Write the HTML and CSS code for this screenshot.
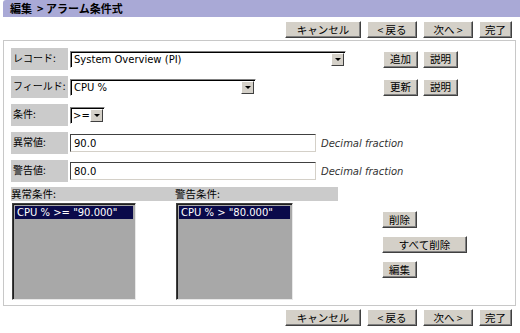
FILE: index.html
```html
<!DOCTYPE html>
<html lang="ja">
<head>
<meta charset="UTF-8" />
<title>アラーム条件式</title>
<link rel="stylesheet" href="styles.css">
</head>
<body>
<div class="titlebar">編集 &nbsp;&gt; アラーム条件式</div>

<div class="toolbar">
    <button class="btn w-cancel">キャンセル</button>
    <button class="btn w-back">&lt; 戻る</button>
    <button class="btn w-next">次へ &gt;</button>
    <button class="btn w-done">完了</button>
</div>

<div class="panel">
    <div class="row">
        <div class="label">レコード:</div>
        <div class="select sel-record">
            <span class="sel-text">System Overview (PI)</span>
            <span class="arrow"></span>
        </div>
        <div class="side-btns">
            <button class="btn w-small">追加</button>
            <button class="btn w-small">説明</button>
        </div>
    </div>
    <div class="row">
        <div class="label">フィールド:</div>
        <div class="select sel-field">
            <span class="sel-text">CPU %</span>
            <span class="arrow"></span>
        </div>
        <div class="side-btns">
            <button class="btn w-small">更新</button>
            <button class="btn w-small">説明</button>
        </div>
    </div>
    <div class="row">
        <div class="label">条件:</div>
        <div class="select sel-op">
            <span class="sel-text">&gt;=</span>
            <span class="arrow"></span>
        </div>
    </div>
    <div class="row">
        <div class="label">異常値:</div>
        <input type="text" class="field" value="90.0">
        <span class="hint">Decimal fraction</span>
    </div>
    <div class="row">
        <div class="label">警告値:</div>
        <input type="text" class="field" value="80.0">
        <span class="hint">Decimal fraction</span>
    </div>

    <div class="list-head">
        <span class="head-alarm">異常条件:</span>
        <span>警告条件:</span>
    </div>
    <div class="lists">
        <div class="listbox list-alarm">
            <div class="item">CPU % &gt;= "90.000"</div>
        </div>
        <div class="listbox list-warn">
            <div class="item">CPU % &gt; "80.000"</div>
        </div>
        <div class="list-btns">
            <button class="btn w-small">削除</button>
            <button class="btn w-all">すべて削除</button>
            <button class="btn w-small">編集</button>
        </div>
    </div>
</div>

<div class="toolbar bottom">
    <button class="btn w-cancel">キャンセル</button>
    <button class="btn w-back">&lt; 戻る</button>
    <button class="btn w-next">次へ &gt;</button>
    <button class="btn w-done">完了</button>
</div>
</body>
</html>
```

FILE: styles.css
```css
body {
    margin: 0;
    background: #fff;
    font-family: "DejaVu Sans", "Noto Sans CJK JP", sans-serif;
    font-size: 11px;
    color: #000;
    width: 520px;
}
.titlebar {
    margin-left: 3px;
    height: 17px;
    line-height: 17px;
    padding-left: 7px;
    background: #a9a9d6;
    border-top-left-radius: 3px;
    font-family: "Noto Sans CJK JP", sans-serif;
    font-weight: bold;
    font-size: 11px;
}
.toolbar {
    display: flex;
    justify-content: flex-end;
    gap: 6px;
    padding: 4px 8px 2px 0;
}
.toolbar.bottom {
    padding-top: 3px;
}
.btn {
    height: 17px;
    padding: 0;
    background: #d4d0c8;
    border: 1px solid;
    border-color: #fff #404040 #404040 #fff;
    box-shadow: inset -1px -1px 0 #808080;
    font-family: "Noto Sans CJK JP", sans-serif;
    font-size: 10.5px;
    line-height: 14px;
    color: #000;
}
.w-cancel { width: 76px; }
.w-back { width: 50px; }
.w-next { width: 50px; }
.w-done { width: 33px; }
.w-small { width: 35px; }
.w-all { width: 85px; }

.panel {
    margin: 0 4px 0 3px;
    border: 1px solid #c8c8c8;
    padding: 7px 0 4px 7px;
    height: 253px;
}
.row {
    display: flex;
    align-items: center;
    height: 22px;
    margin-bottom: 6px;
}
.label {
    width: 57px;
    height: 22px;
    line-height: 20px;
    padding-left: 2px;
    margin-right: 2px;
    background: #cbcbcb;
    font-family: "Noto Sans CJK JP", sans-serif;
    font-size: 10px;
    white-space: nowrap;
    box-sizing: border-box;
}
.select {
    display: flex;
    align-items: center;
    height: 17px;
    box-sizing: border-box;
    background: #fff;
    border: 1px solid;
    border-color: #808080 #fff #fff #808080;
    box-shadow: inset 1px 1px 0 #000;
    padding: 0 1px 0 3px;
    font-size: 10px;
}
.sel-text {
    flex: 1;
    white-space: nowrap;
}
.arrow {
    flex: none;
    width: 13px;
    height: 13px;
    box-sizing: border-box;
    background: #d4d0c8;
    border: 1px solid;
    border-color: #fff #404040 #404040 #fff;
    position: relative;
}
.arrow::after {
    content: "";
    position: absolute;
    left: 3px;
    top: 4px;
    border-left: 3px solid transparent;
    border-right: 3px solid transparent;
    border-top: 3px solid #000;
}
.sel-record { width: 276px; }
.sel-field { width: 186px; }
.sel-op {
    width: 35px;
    padding-left: 2px;
}
.side-btns {
    display: flex;
    gap: 5px;
    margin-left: 37px;
}
.row:nth-child(2) .side-btns {
    margin-left: 127px;
}
.field {
    width: 246px;
    height: 18px;
    box-sizing: border-box;
    margin: 0;
    padding: 1px 3px 0;
    border: 1px solid;
    border-color: #404040 #d4d0c8 #d4d0c8 #404040;
    font-family: "DejaVu Sans", sans-serif;
    font-size: 10px;
}
.hint {
    margin-left: 5px;
    font-style: italic;
    font-size: 10px;
    color: #333;
}
.list-head {
    display: flex;
    width: 327px;
    height: 14px;
    line-height: 14px;
    margin-top: -1px;
    background: #cbcbcb;
    font-family: "Noto Sans CJK JP", sans-serif;
    font-size: 10.5px;
}
.head-alarm {
    width: 164px;
}
.lists {
    display: flex;
    align-items: flex-start;
    margin-top: 2px;
}
.listbox {
    height: 97px;
    box-sizing: border-box;
    background: #a8a8a8;
    border: 1px solid;
    border-color: #404040 #e8e8e8 #e8e8e8 #404040;
    box-shadow: inset 1px 1px 0 #202020;
    padding: 2px;
}
.list-alarm {
    width: 124px;
    margin-left: 1px;
    margin-right: 40px;
}
.list-warn {
    width: 117px;
}
.item {
    background: #0a0a4a;
    color: #fff;
    font-size: 10px;
    line-height: 13px;
    padding-left: 2px;
    white-space: nowrap;
    overflow: hidden;
}
.list-btns {
    display: flex;
    flex-direction: column;
    align-items: flex-start;
    gap: 8px;
    margin-left: 89px;
    margin-top: 8px;
}
```
